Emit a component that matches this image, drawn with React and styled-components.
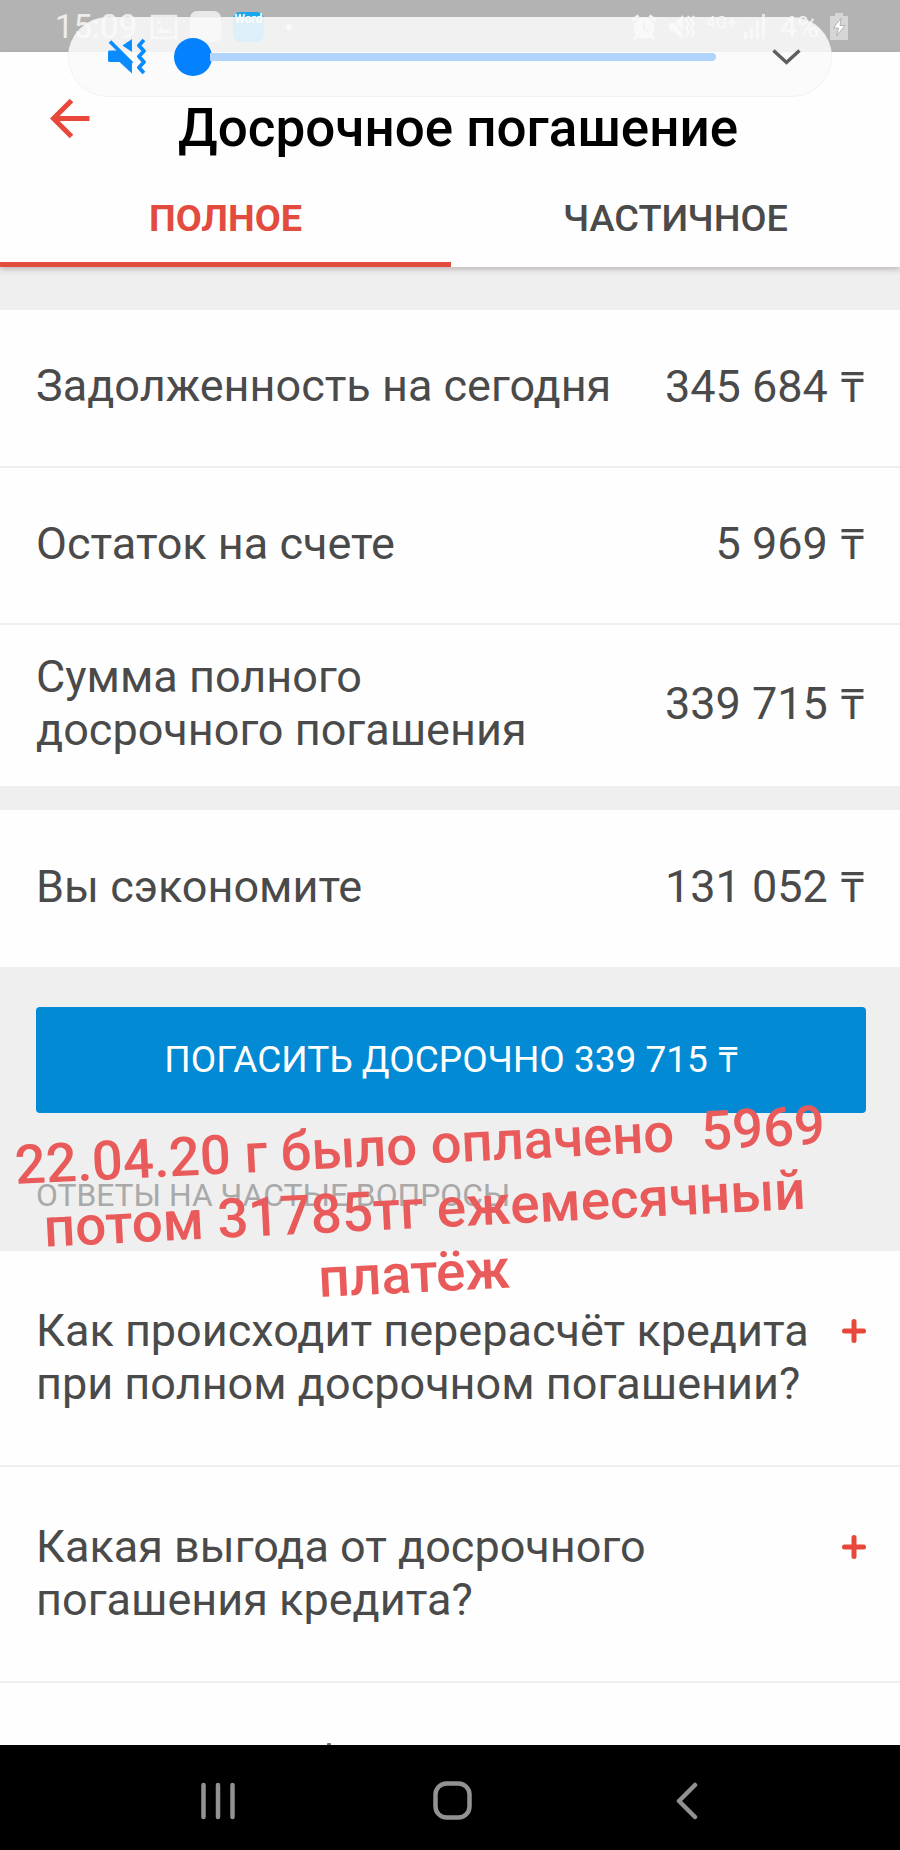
import React from 'react';
import styled, { createGlobalStyle } from 'styled-components';

const Global = createGlobalStyle`
  * { box-sizing: border-box; }
  body { margin: 0; background: #fff; font-family: Roboto, "Noto Sans", sans-serif; color: #4a4a4a; }
`;

const Screen = styled.div`
  position: relative;
  display: flex;
  flex-direction: column;
  width: 900px;
  height: 1850px;
  overflow: hidden;
  background: #fefefe;
`;

const StatusBar = styled.div`
  display: flex;
  align-items: center;
  justify-content: space-between;
  flex: none;
  height: 52px;
  padding: 1px 52px 0 55px;
  background: #b3b3b3;
  color: #ededed;
  font-size: 33px;
`;

const StatusGroup = styled.div`
  display: flex;
  align-items: center;
  gap: ${(p) => p.$gap}px;
`;

const Clock = styled.span`
  width: 83px;
  line-height: 50px;
`;

const Percent = styled.span`
  font-size: 30px;
`;

const NetLabel = styled.span`
  width: 26px;
  height: 27px;
  font-size: 17px;
  line-height: 18px;
  white-space: nowrap;
`;

const AppBadge = styled.span`
  width: 31px;
  height: 31px;
  border-radius: 7px;
  background: #e9e9e9;
`;

const WordBadge = styled.span`
  width: 31px;
  height: 30px;
  border-radius: 7px;
  background: #18a6ec;
  color: #fff;
  font-size: 12px;
  font-weight: 700;
  line-height: 15px;
  text-align: center;
`;

const Dot = styled.span`
  width: 6px;
  height: 6px;
  margin-left: 10px;
  border-radius: 50%;
  background: #f0f0f0;
`;

const VolumePanel = styled.div`
  position: absolute;
  left: 68px;
  top: 17px;
  display: flex;
  align-items: center;
  width: 764px;
  height: 80px;
  padding: 0 30px 0 39px;
  border-radius: 40px;
  border: 1px solid rgba(240, 240, 240, 0.8);
  background: rgba(250, 250, 250, 0.87);
`;

const Slider = styled.div`
  display: flex;
  align-items: center;
  width: 543px;
  height: 38px;
  margin: 0 56px 0 28px;
`;

const Knob = styled.div`
  flex: none;
  width: 38px;
  height: 38px;
  border-radius: 50%;
  background: #0381fe;
`;

const Track = styled.div`
  flex: 1;
  height: 8px;
  margin-left: -2px;
  border-radius: 0 4px 4px 0;
  background: #b0d4fb;
`;

const Header = styled.header`
  position: relative;
  flex: none;
  height: 215px;
  background: #fefefe;
  box-shadow: 0 3px 5px rgba(90, 70, 70, 0.28);
`;

const TitleRow = styled.div`
  display: flex;
  height: 128px;
  padding: 46px 0 0 50px;
`;

const Title = styled.h1`
  margin: 0 0 0 87px;
  font-size: 53px;
  line-height: 60px;
  font-weight: 500;
  color: #000;
  white-space: nowrap;
`;

const Tabs = styled.div`
  display: grid;
  grid-template-columns: 451px 449px;
  height: 87px;
`;

const Tab = styled.div`
  display: flex;
  justify-content: center;
  padding-top: 16px;
  border-bottom: 5px solid ${(p) => (p.$active ? '#e24b3d' : 'transparent')};
  color: ${(p) => (p.$active ? '#e24b3d' : '#4a4a4a')};
  font-size: 37.8px;
  line-height: 44px;
  font-weight: ${(p) => (p.$active ? 700 : 500)};
`;

const Band = styled.div`
  flex: none;
  height: ${(p) => p.$h}px;
  background: #efefef;
`;

const Row = styled.div`
  display: flex;
  align-items: center;
  justify-content: space-between;
  flex: none;
  height: ${(p) => p.$h}px;
  padding: 0 36px 4px 36px;
  border-bottom: ${(p) => (p.$line ? '2px solid #eeeeee' : 'none')};
  font-size: 45px;
  line-height: 53px;
  white-space: pre-line;
`;

const Label = styled.span`
  padding-bottom: 1px;
`;

const Amount = styled.span`
  white-space: nowrap;
`;

const Tenge = styled.span`
  margin-left: 0.04em;
  font-size: 0.95em;
  line-height: 1;
`;

const Action = styled.section`
  flex: none;
  height: 284px;
  padding: 40px 34px 0 36px;
  background: #efefef;
`;

const PayButton = styled.button`
  display: block;
  width: 100%;
  height: 106px;
  padding: 0 0 2px;
  border: 0;
  border-radius: 4px;
  background: #028ad4;
  color: #fff;
  font-family: inherit;
  font-size: 37px;
`;

const SectionLabel = styled.div`
  padding-top: 63px;
  font-size: 31.8px;
  line-height: 38px;
  color: #a9a9a9;
`;

const Question = styled.div`
  display: flex;
  justify-content: space-between;
  flex: none;
  height: ${(p) => p.$h}px;
  padding: 53px 34px 0 36px;
  border-bottom: 2px solid #eeeeee;
  font-size: 45px;
  line-height: 53px;
  white-space: pre-line;
`;

const Plus = styled.svg`
  flex: none;
  margin-top: 15px;
`;

const NextQuestion = styled.div`
  display: flex;
  align-items: flex-end;
  flex: none;
  height: 62px;
  padding-left: 327px;

  &::after {
    content: '';
    width: 4px;
    height: 2px;
    border-radius: 1px 1px 0 0;
    background: #6a6a6a;
  }
`;

const NavBar = styled.nav`
  display: flex;
  align-items: center;
  flex: none;
  height: 105px;
  padding: 6px 0 0 200px;
  background: #000;
`;

const NavIcon = styled.svg`
  flex: none;
  margin-left: ${(p) => p.$before || 0}px;
  fill: none;
  stroke: #929292;
  stroke-width: 4.5;
  stroke-linecap: round;
  stroke-linejoin: round;
`;

const Note = styled.div`
  position: absolute;
  left: 15px;
  top: 1113px;
  display: flex;
  flex-direction: column;
  align-items: center;
  width: 810px;
  transform: rotate(-2.85deg);
  color: #e95a5a;
  font-weight: 500;
  line-height: 64px;
  white-space: pre;
`;

const NoteLine = styled.div`
  margin-left: ${(p) => p.$shift * 2}px;
  font-size: ${(p) => p.$size}px;
`;

const rows = [
  { label: 'Задолженность на сегодня', value: '345 684', h: 158, line: true },
  { label: 'Остаток на счете', value: '5 969', h: 157, line: true },
  { label: 'Сумма полного\nдосрочного погашения', value: '339 715', h: 161 },
];

const questions = [
  { text: 'Как происходит перерасчёт кредита\nпри полном досрочном погашении?', h: 216 },
  { text: 'Какая выгода от досрочного\nпогашения кредита?', h: 216 },
];

function Money({ children }) {
  return (
    <Amount>
      {children} <Tenge>₸</Tenge>
    </Amount>
  );
}

export default function App() {
  return (
    <>
      <Global />
      <Screen>
        <StatusBar>
          <StatusGroup $gap={12}>
            <Clock>15:09</Clock>
            <svg width="28" height="26" viewBox="0 0 28 26" fill="none" stroke="#e9e9e9" strokeWidth="2.5">
              <rect x="2" y="2" width="24" height="22" />
              <path d="M6 19l5-6 4 4 3-3 5 5z" fill="#e9e9e9" stroke="none" />
              <circle cx="9" cy="8" r="2" fill="#e9e9e9" stroke="none" />
            </svg>
            <AppBadge />
            <WordBadge>Word</WordBadge>
            <Dot />
          </StatusGroup>
          <StatusGroup $gap={11}>
            <svg width="26" height="28" viewBox="0 0 26 28" fill="none" stroke="#f0f0f0" strokeWidth="3">
              <circle cx="13" cy="15" r="9" fill="#f0f0f0" />
              <path d="M1.5 7.5l6-5M24.5 7.5l-6-5M6 23l-3 3M20 23l3 3" />
              <path d="M13 9v6l5 4" stroke="#b3b3b3" strokeWidth="2" />
            </svg>
            <svg width="27" height="28" viewBox="0 0 27 28" fill="#f0f0f0" stroke="#f0f0f0">
              <path d="M1 10h5l9-8v24l-9-8H1z" stroke="none" />
              <path d="M2 1l15 22" stroke="#b3b3b3" strokeWidth="2" />
              <path d="M21 3l-3 4 3 4-3 4 3 4-3 4M26 3l-3 4 3 4-3 4 3 4-3 4" fill="none" strokeWidth="2" />
            </svg>
            <NetLabel>4G+</NetLabel>
            <svg width="26" height="27" viewBox="0 0 26 27" fill="#e4e4e4">
              <rect x="1" y="19" width="3" height="7" />
              <rect x="7" y="14" width="3" height="12" />
              <rect x="13" y="8" width="3" height="18" />
              <rect x="19" y="1" width="3" height="25" />
            </svg>
            <Percent>4%</Percent>
            <svg width="18" height="27" viewBox="0 0 18 27" fill="#d6d6d6">
              <path d="M5 0h8v3h5v24H0V3h5z" />
              <path d="M11 5L3.500 15h5l-2 8L15 12.500h-5z" fill="#fff" stroke="#b3b3b3" strokeWidth="1" />
            </svg>
          </StatusGroup>
        </StatusBar>
        <Header>
          <TitleRow>
            <svg width="41" height="42" viewBox="0 0 41 42" fill="none" stroke="#e8473a" strokeWidth="5">
              <path d="M39.500 20.500H4M21.500 2.500L3.500 20.500l18 18" />
            </svg>
            <Title>Досрочное погашение</Title>
          </TitleRow>
          <Tabs>
            <Tab $active>ПОЛНОЕ</Tab>
            <Tab>ЧАСТИЧНОЕ</Tab>
          </Tabs>
        </Header>
        <Band $h={43} />
        {rows.map((r) => (
          <Row key={r.value} $h={r.h} $line={r.line}>
            <Label>{r.label}</Label>
            <Money>{r.value}</Money>
          </Row>
        ))}
        <Band $h={24} />
        <Row $h={157}>
          <Label>Вы сэкономите</Label>
          <Money>131 052</Money>
        </Row>
        <Action>
          <PayButton>
            ПОГАСИТЬ ДОСРОЧНО <Money>339 715</Money>
          </PayButton>
          <SectionLabel>ОТВЕТЫ НА ЧАСТЫЕ ВОПРОСЫ</SectionLabel>
        </Action>
        {questions.map((q) => (
          <Question key={q.text} $h={q.h}>
            <span>{q.text}</span>
            <Plus width="24" height="24" viewBox="0 0 24 24" stroke="#e8473a" strokeWidth="5" strokeLinecap="round">
              <path d="M12 2.5v19M2.5 12h19" />
            </Plus>
          </Question>
        ))}
        <NextQuestion />
        <NavBar>
          <NavIcon width="36" height="38" viewBox="0 0 36 38">
            <path d="M3.500 3v32M18 3v32M32.500 3v32" />
          </NavIcon>
          <NavIcon $before={197} width="39" height="39" viewBox="0 0 39 39">
            <rect x="2.500" y="2.500" width="34" height="34" rx="11" />
          </NavIcon>
          <NavIcon $before={204} width="23" height="38" viewBox="0 0 23 38">
            <path d="M19 3L3 19l16 16" />
          </NavIcon>
        </NavBar>
        <VolumePanel>
          <svg width="38" height="38" viewBox="0 0 38 38" fill="#0a8cff">
            <path d="M0 14q0-1.500 1.500-1.500H10L24 26v9.500L11.500 24H1.500Q0 24 0 22.500z" />
            <path d="M14.500 7.500L24 1v13z" />
            <path d="M2 3.500l22 22" fill="none" stroke="#0a8cff" strokeWidth="3.800" />
            <path
              d="M36 2l-5 5.500 5 5.500-5 5.500 5 5.500-5 5.500 5 5.500"
              fill="none"
              stroke="#0a8cff"
              strokeWidth="3.800"
              strokeLinejoin="round"
            />
          </svg>
          <Slider>
            <Knob />
            <Track />
          </Slider>
          <svg width="29" height="18" viewBox="0 0 29 18" fill="none" stroke="#5f5f5f" strokeWidth="3.500">
            <path d="M1.500 2.500L14.500 14.500l13-12" />
          </svg>
        </VolumePanel>
        <Note>
          <NoteLine $size={54.5} $shift={3}>{'22.04.20 г было оплачено  5969'}</NoteLine>
          <NoteLine $size={54.8} $shift={4.5}>потом 31785тг ежемесячный</NoteLine>
          <NoteLine $size={55} $shift={-9}>платёж</NoteLine>
        </Note>
      </Screen>
    </>
  );
}
